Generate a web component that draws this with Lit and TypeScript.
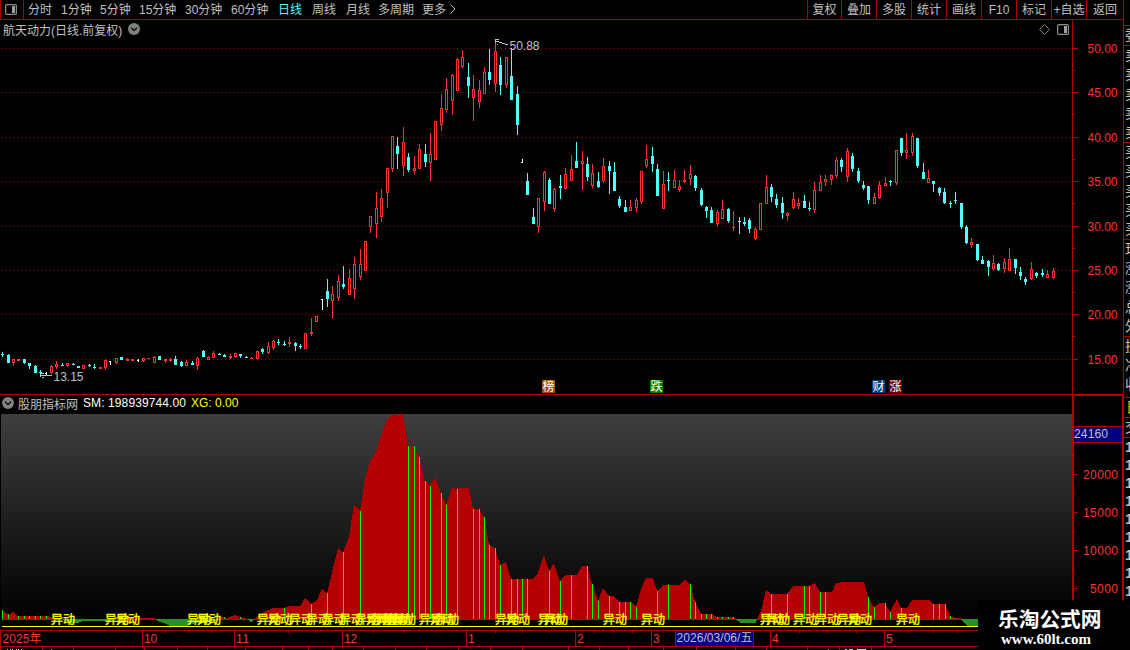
import { LitElement, css, html, svg } from 'lit'
import { customElement, property } from 'lit/decorators.js'
import { classMap } from 'lit/directives/class-map.js'

type Point = [number, number]

// x, high, low, body top, body bottom, kind (u: up, d: down, w: flat)
const CANDLES = `
2 352 357 354 355 d|8 354 363 355 363 d|13 359 366 359 363 u|18 359 361 359 361 u|24 359 364 359 363 d
29 363 369 363 366 d|35 365 373 366 373 d|40 370 375 372 373 d|46 372 375 373 374 w|51 365 374 366 373 u
56 361 369 364 367 u|62 363 366 365 366 d|67 363 367 363 366 u|73 363 365 364 365 d|78 366 368 366 368 d
83 365 369 365 369 u|89 364 367 365 366 d|94 364 369 367 368 d|100 367 369 367 369 u|105 359 370 360 368 u
110 361 365 361 362 w|116 358 364 358 363 u|121 357 360 357 360 d|127 358 361 359 361 u|132 359 361 359 361 u
138 359 362 360 361 w|143 358 362 358 361 u|148 358 359 358 359 u|154 356 363 357 363 u|159 356 360 356 360 d
165 359 363 359 361 u|170 358 362 359 361 u|175 356 365 359 365 d|181 361 367 362 366 d|186 360 366 362 366 u
192 361 365 363 365 d|197 357 370 358 366 u|203 350 357 351 357 d|208 356 360 357 360 u|213 351 358 353 358 u
219 353 355 354 355 d|224 354 357 355 357 d|230 354 359 356 358 u|235 353 358 353 357 u|240 354 358 354 356 d
246 356 358 357 358 d|251 357 359 358 359 u|257 351 359 351 359 u|262 348 354 349 352 d|268 342 354 346 353 u
273 340 350 341 348 u|278 339 345 342 343 d|284 341 346 344 345 d|289 337 347 342 344 u|295 342 351 343 346 d
300 344 349 346 347 d|305 333 349 333 349 u|311 318 336 332 334 u|316 316 322 316 322 u|322 299 310 299 300 w
327 279 307 291 299 d|332 286 318 294 301 u|338 275 301 281 298 u|343 266 289 284 287 d|349 269 295 278 295 u
354 257 299 264 289 u|360 249 280 264 277 u|365 241 271 241 271 u|370 216 233 216 227 u|376 192 238 208 224 u
381 189 222 198 217 u|387 168 208 168 193 u|392 136 172 136 169 u|397 137 169 146 154 d|403 127 176 142 166 u
408 153 172 157 170 d|414 156 174 168 171 u|419 144 169 149 169 u|425 144 167 154 162 d|430 133 181 154 163 u
435 121 160 121 160 u|441 94 131 108 125 u|446 78 113 89 110 u|452 74 115 75 101 u|457 58 91 59 91 u
462 50 68 57 67 u|468 63 98 77 86 d|473 75 121 89 98 u|479 80 108 90 102 u|484 67 94 72 94 u
489 49 85 72 80 d|495 43 92 51 84 u|500 57 95 65 85 d|506 57 88 57 85 u|511 48 100 76 100 d
517 86 135 94 125 d|522 159 163 162 163 w|527 173 195 181 195 d|533 208 224 217 224 d|538 198 233 198 227 u
544 171 211 172 202 u|549 178 204 180 204 d|554 188 212 189 209 u|560 175 199 186 188 d|565 168 189 174 189 u
571 155 181 169 181 u|576 142 168 161 168 d|582 151 190 161 164 u|587 157 181 164 177 d|592 164 188 173 186 u
598 172 188 181 187 d|603 158 183 166 181 u|609 161 194 166 171 d|614 162 191 172 191 d|619 196 208 199 206 d
625 200 212 207 212 d|630 200 211 207 211 u|636 198 212 200 208 u|641 171 204 171 202 u|646 145 168 159 166 u
652 147 172 156 164 d|657 164 196 169 196 d|663 171 209 184 209 u|668 172 191 180 181 d|674 170 188 180 188 u
679 180 192 186 190 u|684 170 183 180 182 u|690 165 185 174 179 u|695 175 191 176 188 d|701 188 206 190 205 d
706 206 218 207 211 d|711 207 223 210 223 d|717 210 226 212 224 u|722 200 219 209 219 u|728 208 223 209 221 d
733 211 231 227 228 u|739 217 234 221 222 d|744 217 226 222 224 d|749 218 233 220 229 d|755 227 240 229 239 u
760 203 230 203 230 u|766 175 204 187 204 u|771 184 202 187 197 d|776 194 208 199 205 d|782 197 219 203 213 d
787 212 221 213 216 u|793 192 209 199 208 u|798 198 209 203 206 u|804 195 208 201 208 d|809 202 211 208 209 d
814 182 213 190 210 u|820 175 191 182 191 u|825 175 186 179 182 u|831 175 185 175 180 u|836 157 178 160 176 u
841 158 172 160 167 d|847 148 182 151 177 u|852 153 172 156 169 d|858 168 183 171 181 d|863 181 190 185 188 d
868 186 204 186 200 d|874 193 204 197 204 u|879 181 199 185 198 u|885 177 186 183 186 u|890 180 186 181 182 d
896 150 185 150 183 u|901 138 156 138 153 d|906 133 159 150 153 u|912 133 156 136 153 u|917 138 168 138 166 d
923 163 179 172 179 d|928 170 183 178 183 u|933 181 192 181 184 d|939 187 196 188 193 d|944 188 204 192 203 d
950 201 208 203 204 d|955 192 204 200 201 d|961 203 229 203 227 d|966 225 244 227 243 d|971 238 248 242 245 u
977 244 261 244 260 d|982 256 264 260 264 d|988 260 276 261 267 d|993 255 270 263 269 u|998 263 271 264 270 d
1004 258 273 262 269 u|1009 248 271 259 271 u|1015 259 274 259 268 d|1020 267 280 272 276 d|1025 277 285 279 282 d
1031 262 280 269 279 u|1036 272 278 273 276 d|1042 269 277 273 275 d|1047 270 278 274 278 u|1053 268 279 271 278 u`
  .trim()
  .split(/[|\n]/)
  .map((row) => {
    const cells = row.trim().split(' ')
    const [x, high, low, top, bottom] = cells.slice(0, 5).map(Number)
    return { x, high, low, top, bottom, kind: cells[5] }
  })

const parsePoints = (text: string): Point[] =>
  text.trim().split(/\s+/).map((pair) => pair.split(',').map(Number) as Point)

const AREA = parsePoints(`
2,610 9,615 13,612 18,616 48,616 56,619 112,619 116,618 154,618 156,619 215,619 222,617 228,618 235,615 240,617
248,619 254,619 262,613 273,608 284,608 289,606 300,606 305,598 311,604 317,600 322,589 327,593 338,548 343,552
349,537 354,504 360,511 365,479 370,461 376,452 381,435 387,419 392,415 403,414 408,446 414,446 419,457 425,481
430,486 435,477 441,493 446,505 452,488 457,489 461,488 469,488 473,509 479,509 484,517 489,545 495,548 500,565
506,562 511,579 533,579 538,573 544,555 549,571 554,563 560,581 565,575 577,575 582,566 587,566 592,584 598,601
603,588 609,596 614,596 619,602 631,602 636,607 641,589 646,578 653,578 657,591 663,585 679,585 685,580 690,584
695,602 701,614 712,614 717,617 733,617 737,619 757,619 761,611 766,590 771,594 787,594 793,586 809,586 815,583
820,592 832,592 836,583 844,582 864,582 868,597 874,607 880,603 885,603 890,612 897,599 901,608 907,608 912,600
929,600 933,604 945,604 950,616 955,618 961,618 962,619`)

const NEGATIVE = [
  '62,619 72,623 77,623 83,621 110,621 113,619',
  '155,619 160,622 166,624 170,626 187,626 195,623 215,621 220,619',
  '247,619 251,622 255,619',
  '735,619 741,623 756,623 757,619',
  '961,619 967,626 978,626 978,619',
]

const SPIKES = [
  2, 8, 18, 24, 29, 35, 40, 46, 224, 240, 246, 284, 311, 327, 343, 360, 408, 414, 419, 425, 430, 441, 446, 457,
  473, 479, 484, 489, 495, 500, 511, 517, 522, 527, 549, 560, 571, 587, 592, 598, 609, 619, 625, 630, 636, 657,
  668, 690, 695, 701, 706, 711, 717, 722, 728, 733, 771, 787, 804, 809, 820, 825, 868, 874, 885, 890, 901, 933,
  939, 945, 950, 955,
]

const SIGNALS = [
  51, 105, 116, 187, 197, 257, 268, 289, 306, 322, 339, 355, 366, 371, 376, 382, 387, 392, 419, 430, 435, 495,
  506, 538, 544, 603, 641, 760, 766, 793, 815, 837, 848, 896,
]

const PERIODS = ['分时', '1分钟', '5分钟', '15分钟', '30分钟', '60分钟', '日线', '周线', '月线', '多周期', '更多']
const TOOLS = ['复权', '叠加', '多股', '统计', '画线', 'F10', '标记', '+自选', '返回']

const PRICE_ROWS = [48, 92, 137, 181, 226, 270, 314, 359]

const MONTHS: [number, string, number][] = [
  [142, '10', 13.3], [234, '11', 13.3], [342, '12', 13.3], [466, '1', 6.6],
  [575, '2', 6.6], [651, '3', 6.6], [770, '4', 6.6], [884, '5', 6.6],
]

// height of the area outline at a given x
const areaTop = (x: number) => {
  const i = AREA.findIndex(([px]) => px >= x)
  if (i <= 0) return AREA[0][1]
  const [x0, y0] = AREA[i - 1]
  const [x1, y1] = AREA[i]
  return Math.round(y0 + ((y1 - y0) * (x - x0)) / (x1 - x0))
}

const chevron = html`
  <svg width="12" height="12" viewBox="0 0 12 12">
    <circle cx="6" cy="6" r="6" fill="#808080" />
    <path d="M3 4.8 L6 7.6 L9 4.8" fill="none" stroke="#111" stroke-width="1.4" />
  </svg>
`

const panelIcon = html`
  <svg width="12" height="11" viewBox="0 0 12 11">
    <rect x="0.6" y="0.6" width="10.8" height="9.8" rx="1.2" fill="none" stroke="#909090" stroke-width="1.2" />
    <rect x="7" y="2" width="3" height="7" fill="#a0a0a0" />
  </svg>
`

@customElement('tool-bar')
export class ToolBar extends LitElement {
  @property() active = '日线'

  render() {
    return html`
      <div class="toggle">${panelIcon}</div>
      <div class="periods">
        ${PERIODS.map((name) => html`<span class=${classMap({ active: name === this.active })}>${name}</span>`)}
      </div>
      <svg class="more" width="6" height="10" viewBox="0 0 6 10">
        <path d="M0.5 0.5 L5 5 L0.5 9.5" fill="none" stroke="#c0c0c0" />
      </svg>
      <div class="tools">${TOOLS.map((name) => html`<span>${name}</span>`)}</div>
    `
  }

  static styles = css`
    :host {
      display: flex;
      align-items: center;
      box-sizing: border-box;
      height: 20px;
      border-bottom: 1px solid #b00000;
      color: #c0c0c0;
      white-space: nowrap;
    }

    .toggle {
      display: flex;
      align-items: center;
      box-sizing: border-box;
      width: 24px;
      height: 19px;
      padding: 0 0 1px 4px;
      border-left: 1px solid #b00000;
      border-right: 1px solid #b00000;
    }

    .periods {
      display: grid;
      grid-template-columns: 33px 39px 39px 46px 46px 47px 34px 34px 32px 44px 28px;
      padding-left: 4px;
      line-height: 18px;
    }

    .active {
      color: #54fcfc;
    }

    .more {
      margin-bottom: 2px;
    }

    .tools {
      display: grid;
      grid-template-columns: 34px repeat(7, 35px) 38px;
      height: 19px;
      margin-left: auto;
      line-height: 20px;
      text-align: center;
    }

    .tools span {
      height: 19px;
      border-left: 1px solid #b00000;
    }

    .tools span:last-child {
      border-right: 1px solid #b00000;
    }
  `
}

@customElement('kline-chart')
export class KlineChart extends LitElement {
  #candle(c: (typeof CANDLES)[number]) {
    const height = c.bottom - c.top
    if (c.kind === 'w') {
      return svg`
        <rect class="w" x=${c.x} y=${c.high} width="1" height=${c.low - c.high} />
        <rect class="w" x=${c.x - 1} y=${c.top} width="1" height="1" />
      `
    }
    return svg`
      <rect class=${c.kind} x=${c.x} y=${c.high} width="1" height=${c.low - c.high} />
      <rect class=${c.kind} x=${c.x - 1} y=${c.top} width="3" height=${height} />
      ${c.kind === 'u' && height > 2 ? svg`<rect x=${c.x} y=${c.top + 1} width="1" height=${height - 2} />` : ''}
    `
  }

  render() {
    return html`
      <div class="plot">
        <header>
          <span class="name">航天动力(日线.前复权)</span>
          ${chevron}
          <svg class="diamond" width="11" height="11" viewBox="0 0 11 11">
            <path d="M5.5 0.5 L10.5 5.5 L5.5 10.5 L0.5 5.5 Z" fill="none" stroke="#808080" />
          </svg>
          ${panelIcon}
        </header>
        <svg width="1072" height="355" viewBox="0 39 1072 355">
          <g shape-rendering="crispEdges">
            ${PRICE_ROWS.map((y) => svg`<line class="grid" x1="1" x2="1072" y1=${y + 0.5} y2=${y + 0.5} />`)}
            ${CANDLES.map((c) => this.#candle(c))}
            <path class="arrow" d="M41 375.5 H52 M40.5 374 V377 M41 373.5 H44 M42 377.5 H44" />
            <path class="arrow" d="M495 39.5 H499 M495.5 39 V43 M496 41.5 H499 M499 42.5 H502 M502 43.5 H505 M505 44.5 H508 M497 44.5 H498" />
          </g>
          <text x="509.5" y="50" textLength="30">50.88</text>
          <text x="53.5" y="381" textLength="30">13.15</text>
          ${[
            [542, '榜', 'rank'],
            [650, '跌', 'fall'],
            [872, '财', 'money'],
            [889, '涨', 'rise'],
          ].map(
            ([x, mark, name]) => svg`
              <rect class=${name} x=${x} y="380" width="13" height="13" />
              <text class="mark" x=${Number(x) + 0.5} y="391">${mark}</text>
            `
          )}
        </svg>
      </div>
      <svg class="axis" width="52" height="374" viewBox="1072 20 52 374">
        <g class="rule">
          <rect x="1072" y="20" width="1" height="374" />
          <rect x="1123" y="20" width="1" height="374" />
          ${PRICE_ROWS.map((y, i) => svg`
            <rect x="1073" y=${y} width="5" height="1" />
            ${i < 7 ? svg`<rect x="1073" y=${y + 22} width="2" height="1" />` : ''}
          `)}
        </g>
        ${PRICE_ROWS.map((y, i) => svg`<text x="1087.5" y=${y + 5} textLength="30">${(50 - i * 5).toFixed(2)}</text>`)}
      </svg>
    `
  }

  static styles = css`
    :host {
      display: flex;
      box-sizing: border-box;
      height: 375px;
      border-bottom: 1px solid #b00000;
    }

    svg {
      display: block;
      flex: none;
    }

    header {
      display: flex;
      align-items: center;
      box-sizing: border-box;
      width: 1072px;
      height: 19px;
      padding: 0 3px 1px;
      color: #c0c0c0;
    }

    .name {
      width: 125px;
      padding-top: 3px;
      line-height: 18px;
    }

    .diamond {
      margin: 0 7px 0 auto;
    }

    .grid {
      stroke: #b00000;
      stroke-dasharray: 1 3;
    }

    .arrow {
      fill: none;
      stroke: #c0c0c0;
    }

    text {
      fill: #c0c0c0;
    }

    .u {
      fill: #ff3232;
    }

    .d {
      fill: #54fcfc;
    }

    .w,
    .mark {
      fill: #fff;
    }

    .rank {
      fill: #a05000;
    }

    .fall {
      fill: #008000;
    }

    .money {
      fill: #003c80;
    }

    .rise {
      fill: #700000;
    }

    .rule {
      fill: #b00000;
    }

    .axis text {
      fill: #ff3232;
    }
  `
}

@customElement('indicator-chart')
export class IndicatorChart extends LitElement {
  render() {
    return html`
      <div class="plot">
        <header>
          ${chevron}
          <span class="name">股朋指标网</span>
          <span class="sm">SM: 198939744.00</span>
          <span class="xg">XG: 0.00</span>
        </header>
        <svg width="1072" height="216" viewBox="0 414 1072 216">
          <defs>
            <linearGradient id="shade" x1="0" y1="0" x2="0" y2="1">
              <stop offset="0" stop-color="#3e3e3e" />
              <stop offset="1" stop-color="#000" />
            </linearGradient>
          </defs>
          <g shape-rendering="crispEdges">
            <rect x="1" y="414" width="1071" height="206" fill="url(#shade)" />
            <polygon class="area" points="2,620 ${AREA.map((p) => p.join(',')).join(' ')} 962,620" />
            ${NEGATIVE.map((points) => svg`<polygon class="negative" points=${points} />`)}
            ${SPIKES.map((x) => svg`<rect class="spike" x=${x} y=${areaTop(x)} width="1" height=${619 - areaTop(x)} />`)}
            <rect class="base" x="2" y="626" width="976" height="1" />
          </g>
          ${SIGNALS.map((x) => svg`<text class="signal" x=${x} y="623.5">异动</text>`)}
        </svg>
      </div>
      <svg class="axis" width="53" height="235" viewBox="1072 395 53 235">
        <rect class="frame" x="1073" y="395" width="50" height="240" />
        <g class="rule">
          <rect x="1074" y="426" width="48" height="1" />
          <rect x="1074" y="442" width="48" height="1" />
          ${[474, 512, 550, 588].map((y) => svg`
            <rect x="1074" y=${y} width="4" height="1" />
            <rect x="1074" y=${y - 19} width="1" height="1" />
          `)}
        </g>
        <rect class="current" x="1074" y="427" width="48" height="15" />
        <text class="value" x="1074" y="438" textLength="34">24160</text>
        <text x="1083" y="479" textLength="35">20000</text>
        <text x="1083" y="517" textLength="35">15000</text>
        <text x="1083" y="555" textLength="35">10000</text>
        <text x="1090" y="593" textLength="28">5000</text>
      </svg>
    `
  }

  static styles = css`
    :host {
      display: flex;
      height: 235px;
    }

    svg {
      display: block;
      flex: none;
    }

    header {
      display: flex;
      align-items: center;
      box-sizing: border-box;
      width: 1072px;
      height: 19px;
      padding: 0 2px 3px;
      white-space: nowrap;
    }

    .name {
      width: 65px;
      margin-left: 4px;
      color: #c0c0c0;
    }

    .sm {
      width: 108px;
      color: #fff;
      letter-spacing: 0.1px;
    }

    .xg {
      color: #ff0;
    }

    .area {
      fill: #b40000;
    }

    .negative {
      fill: #289028;
    }

    .spike {
      fill: #0f0;
    }

    .base,
    .signal {
      fill: #ff0;
    }

    .signal {
      stroke: #ff0;
      stroke-width: 0.35px;
    }

    .frame {
      fill: none;
      stroke: #b00000;
      stroke-width: 2;
    }

    .rule {
      fill: #b00000;
    }

    .current {
      fill: #000080;
    }

    .axis text {
      fill: #ff3232;
    }

    .axis .value {
      fill: #c0c0c0;
    }
  `
}

@customElement('time-axis')
export class TimeAxis extends LitElement {
  render() {
    const ticks = [165, 188, 211, 261, 288, 315, 373, 404, 435, 495, 522, 549, 594, 613, 632, 799, 827, 856, 908, 933, 957]
    const cells = [0, 42, 73, 115, 144, 177, 207, 245, 282, 308, 332, 363, 395, 426, 458, 490, 522, 568, 599, 628, 663, 696, 735, 766, 807, 839, 871]
    return html`
      <svg width="978" height="20" viewBox="0 630 978 20">
        <g class="rule" shape-rendering="crispEdges">
          <rect x="0" y="630" width="978" height="1" />
          <rect x="0" y="646" width="978" height="1" />
          <rect x="0" y="630" width="1" height="17" />
          ${MONTHS.map(([x]) => svg`<rect x=${x} y="630" width="1" height="17" />`)}
          ${ticks.map((x) => svg`<rect x=${x} y="631" width="1" height="2" />`)}
          ${cells.map((x) => svg`<rect x=${x} y="647" width="1" height="3" />`)}
        </g>
        <g shape-rendering="crispEdges">
          ${[7, 10, 12, 16, 18, 21, 51, 828].map((x) => svg`<rect class="date" x=${x} y="649" width="1" height="1" />`)}
          <rect class="index" x="845" y="649" width="2" height="1" />
          <rect class="index" x="849" y="649" width="4" height="1" />
          <rect class="index" x="857" y="649" width="9" height="1" />
        </g>
        <text x="2.5" y="643" textLength="39">2025年</text>
        ${MONTHS.map(([x, label, width]) => svg`<text x=${x + 2} y="643" textLength=${width}>${label}</text>`)}
        <rect class="today" x="675.5" y="630.5" width="78" height="16" />
        <text class="date" x="676.5" y="642" textLength="76">2026/03/06/五</text>
      </svg>
    `
  }

  static styles = css`
    :host {
      display: block;
      height: 20px;
    }

    svg {
      display: block;
    }

    .rule {
      fill: #b00000;
    }

    text {
      fill: #ff3232;
    }

    .today {
      fill: #000080;
      stroke: #b00000;
    }

    .date {
      fill: #c0c0c0;
    }

    .index {
      fill: #54fcfc;
    }
  `
}

@customElement('quote-strip')
export class QuoteStrip extends LitElement {
  render() {
    const groups = [
      ['委'],
      ['卖', '卖', '卖', '卖', '卖'],
      ['买', '买', '买', '买', '买'],
      ['现', '涨', '涨', '总', '外'],
      ['换', '净', '收'],
    ]
    return html`
      ${groups.map((rows) => html`<div class="group">${rows.map((name) => html`<p>${name}</p>`)}</div>`)}
      <div class="group tab"><p>日</p></div>
      <div class="group"><p>交</p></div>
      <div class="group deals">${Array.from({ length: 9 }, () => html`<p>1</p>`)}</div>
    `
  }

  static styles = css`
    :host {
      display: block;
      box-sizing: border-box;
      width: 6px;
      height: 600px;
      padding-top: 25px;
      overflow: hidden;
      color: #c0c0c0;
      font-size: 14px;
    }

    .group {
      border-top: 1px solid #b00000;
    }

    p {
      width: 20px;
      height: 19.2px;
      margin: 0 0 0 1px;
      line-height: 18px;
    }

    .tab {
      margin-top: 2px;
      color: #e0d000;
    }

    .tab p {
      margin-left: 2px;
    }

    .deals p {
      height: 18px;
      margin-left: 1px;
      line-height: 18px;
      font-size: 15px;
      font-weight: bold;
    }
  `
}

@customElement('app-root')
export class AppRoot extends LitElement {
  render() {
    return html`
      <main>
        <tool-bar active="日线"></tool-bar>
        <kline-chart></kline-chart>
        <indicator-chart></indicator-chart>
        <time-axis></time-axis>
      </main>
      <quote-strip></quote-strip>
      <div class="watermark">
        <strong>乐淘公式网</strong>
        <span>www.60lt.com</span>
      </div>
    `
  }

  static styles = css`
    :host {
      position: relative;
      display: flex;
      width: 1130px;
      height: 650px;
      overflow: hidden;
      background: #000;
      font: 12px 'Liberation Sans', 'Noto Sans CJK SC', sans-serif;
    }

    main {
      flex: none;
      width: 1124px;
    }

    .watermark {
      position: absolute;
      right: 0;
      bottom: 0;
      display: flex;
      flex-direction: column;
      box-sizing: border-box;
      width: 152px;
      height: 50px;
      padding: 7px 0 0 20px;
      background: #000;
      color: #fff;
    }

    strong {
      font-size: 20.7px;
      line-height: 25px;
    }

    span {
      padding-left: 3px;
      font: bold 15px/15px 'Liberation Serif', serif;
    }
  `
}

declare global {
  interface HTMLElementTagNameMap {
    'app-root': AppRoot
    'tool-bar': ToolBar
    'kline-chart': KlineChart
    'indicator-chart': IndicatorChart
    'time-axis': TimeAxis
    'quote-strip': QuoteStrip
  }
}
